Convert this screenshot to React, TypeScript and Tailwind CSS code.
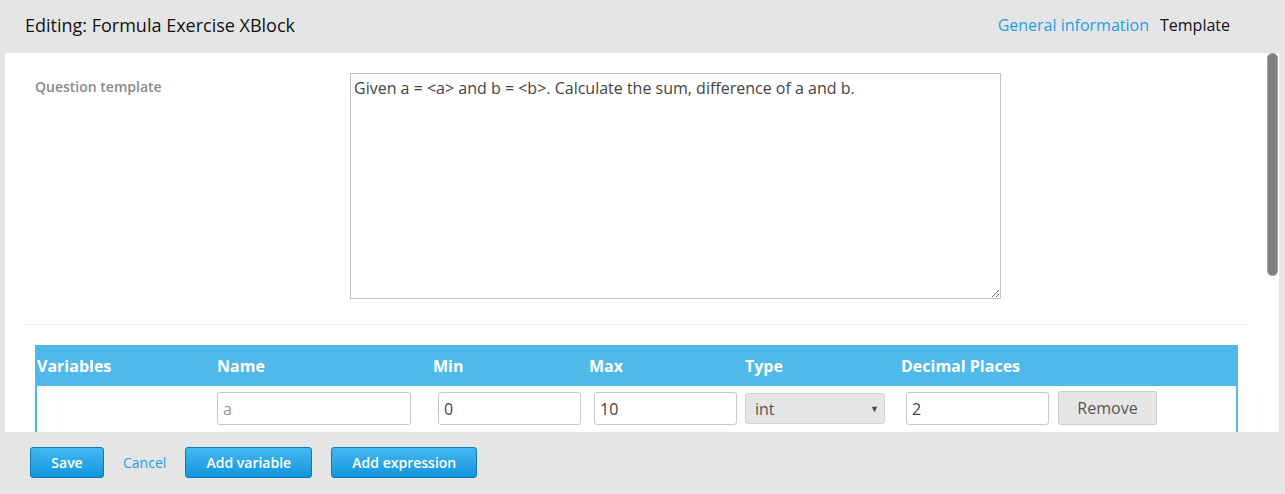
const cols = {
  variables: "w-[180px]",
  name: "w-[216px]",
  min: "w-[156px]",
  max: "w-[156px]",
  type: "w-[156px]",
};

const inputClass =
  "h-[33px] rounded-[3px] border border-[#c8c8c8] bg-white px-[5px] text-[16px] text-[#444] outline-none";

const BlueButton = ({ label, width }: { label: string; width: string }) => (
  <button
    className={`${width} h-[31px] rounded-[3px] border border-[#1279b3] bg-gradient-to-b from-[#43b8f1] to-[#0896dd] text-[14px] font-semibold text-white`}
  >
    {label}
  </button>
);

const App = () => {
  return (
    <div className="flex h-[494px] w-[1285px] flex-col bg-[#e5e5e5] font-['Open_Sans',sans-serif]">
      <header className="flex h-[53px] items-center justify-between pb-[3px] pl-[25px] pr-[55px]">
        <h1 className="text-[18px] text-[#111]">Editing: Formula Exercise XBlock</h1>
        <nav className="flex gap-[11px] text-[16px]">
          <a className="text-[#1ba2e6]">General information</a>
          <a className="text-[#111]">Template</a>
        </nav>
      </header>

      <main className="relative ml-[5px] mr-[6px] h-[379px] overflow-hidden bg-white">
        <div className="absolute right-[1px] top-0 h-[223px] w-[11px] rounded-[5px] border border-[#a2a2a2] bg-[#7f7f7f]" />

        <section className="flex pt-[20px]">
          <label className="w-[345px] pl-[30px] pt-[3px] text-[14px] font-semibold text-[#8a8a8a]">
            Question template
          </label>
          <textarea
            readOnly
            className="h-[226px] w-[651px] border border-[#c4c4c4] px-[3px] py-[3px] text-[16px] leading-[22px] text-[#444] outline-none"
            defaultValue="Given a = <a> and b = <b>. Calculate the sum, difference of a and b."
          />
        </section>

        <hr className="ml-[20px] mr-[31px] mt-[25px] border-[#ececec]" />

        <section className="ml-[30px] mt-[20px] w-[1203px]">
          <div className="flex h-[41px] items-center bg-[#4fbaea] pl-[2px] text-[16px] font-bold text-white">
            <div className={cols.variables}>Variables</div>
            <div className={cols.name}>Name</div>
            <div className={cols.min}>Min</div>
            <div className={cols.max}>Max</div>
            <div className={cols.type}>Type</div>
            <div>Decimal Places</div>
          </div>
          <div className="flex h-[60px] border-x-2 border-[#4fbaea] pt-[6px]">
            <div className={cols.variables} />
            <div className={cols.name}>
              <input
                readOnly
                value="a"
                className={`${inputClass} w-[194px] bg-[#f5f5f5] text-[#999]`}
              />
            </div>
            <div className={cols.min}>
              <input readOnly value="0" className={`${inputClass} ml-[5px] w-[143px]`} />
            </div>
            <div className={cols.max}>
              <input readOnly value="10" className={`${inputClass} ml-[5px] w-[143px]`} />
            </div>
            <div className={cols.type}>
              <div className="mt-[1px] flex h-[31px] w-[140px] items-center justify-between rounded-[3px] border border-[#d2d2d2] bg-[#e6e6e6] pl-[9px] pr-[5px] text-[16px] text-[#555]">
                <span>int</span>
                <span className="text-[9px] text-[#444]">▼</span>
              </div>
            </div>
            <div className="flex gap-[9px]">
              <input readOnly value="2" className={`${inputClass} ml-[5px] w-[143px]`} />
              <button className="h-[34px] w-[99px] -translate-y-[1px] rounded-[3px] border border-[#cbcbcb] bg-[#e6e6e6] text-[16px] text-[#555]">
                Remove
              </button>
            </div>
          </div>
        </section>
      </main>

      <footer className="flex flex-1 items-center gap-[19px] pb-[2px] pl-[30px]">
        <BlueButton label="Save" width="w-[74px]" />
        <a className="text-[14px] text-[#1ba2e6]">Cancel</a>
        <BlueButton label="Add variable" width="w-[127px]" />
        <BlueButton label="Add expression" width="w-[146px]" />
      </footer>
    </div>
  );
};

export default App;
